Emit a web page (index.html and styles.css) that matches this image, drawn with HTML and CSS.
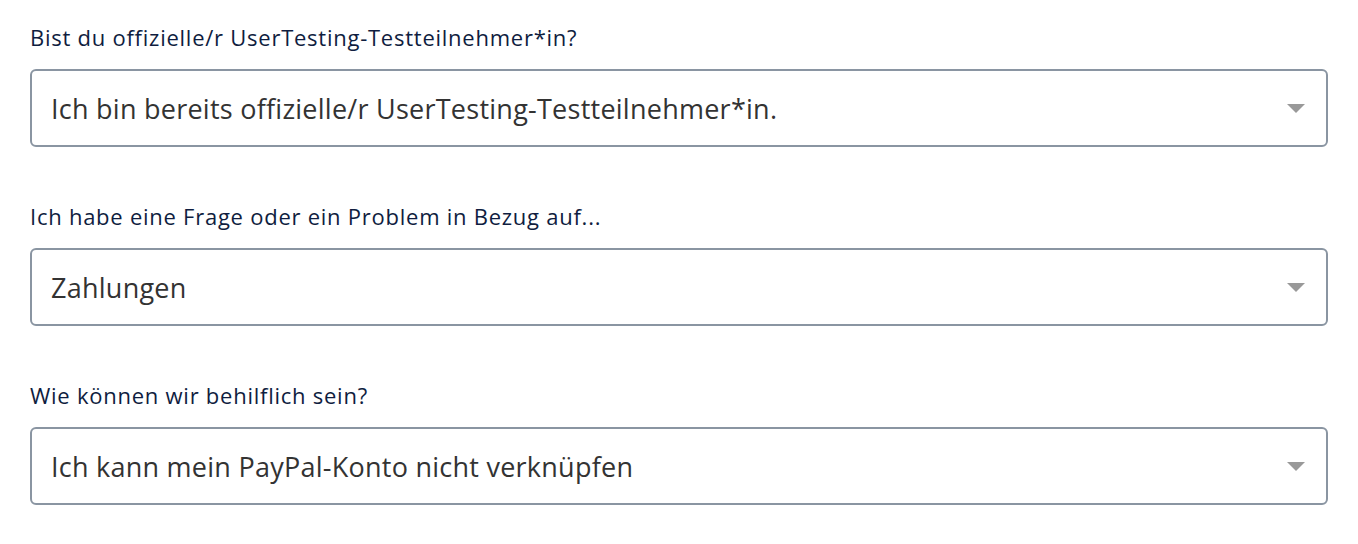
FILE: index.html
```html
<!DOCTYPE html>
<html lang="de">
<head>
    <meta charset="UTF-8">
    <title>Support</title>
    <link rel="stylesheet" href="styles.css">
</head>
<body>
    <form class="support-form">
        <div class="field">
            <label class="field-label">Bist du offizielle/r UserTesting-Testteilnehmer*in?</label>
            <div class="select">
                <span class="select-value">Ich bin bereits offizielle/r UserTesting-Testteilnehmer*in.</span>
                <svg class="select-arrow" width="18" height="9" viewBox="0 0 18 9"><path d="M0 0h18l-9 9z" fill="#999"/></svg>
            </div>
        </div>

        <div class="field">
            <label class="field-label">Ich habe eine Frage oder ein Problem in Bezug auf...</label>
            <div class="select">
                <span class="select-value">Zahlungen</span>
                <svg class="select-arrow" width="18" height="9" viewBox="0 0 18 9"><path d="M0 0h18l-9 9z" fill="#999"/></svg>
            </div>
        </div>

        <div class="field">
            <label class="field-label">Wie können wir behilflich sein?</label>
            <div class="select">
                <span class="select-value">Ich kann mein PayPal-Konto nicht verknüpfen</span>
                <svg class="select-arrow" width="18" height="9" viewBox="0 0 18 9"><path d="M0 0h18l-9 9z" fill="#999"/></svg>
            </div>
        </div>
    </form>
</body>
</html>
```

FILE: styles.css
```css
/* Base */
body {
    margin: 0;
    background: #ffffff;
    font-family: 'Open Sans', 'Lato', sans-serif;
}

.support-form {
    width: 1298px;
    padding: 24px 30px 0;
    display: flex;
    flex-direction: column;
    gap: 56px;
}

/* Field */
.field {
    display: flex;
    flex-direction: column;
    gap: 19px;
}

.field-label {
    font-size: 22px;
    line-height: 26px;
    letter-spacing: 0.75px;
    color: #0f1d40;
}

/* Select box */
.select {
    height: 74px;
    box-sizing: content-box;
    border: 2px solid #8a95a2;
    border-radius: 6px;
    display: flex;
    align-items: center;
    justify-content: space-between;
    padding: 0 21px 0 19px;
}

.select-value {
    font-size: 27px;
    letter-spacing: 0.25px;
    color: #333333;
}

.select-arrow {
    display: block;
}
```
